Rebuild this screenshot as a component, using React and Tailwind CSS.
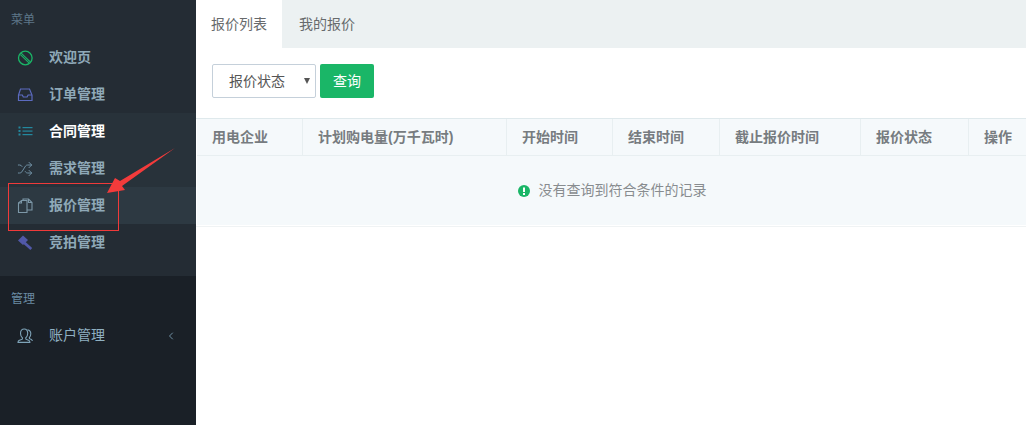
import React from "react";
import { Shuffle, ChevronLeft } from "lucide-react";

const FONT = "font-['Liberation_Sans','Noto_Sans_CJK_SC',sans-serif]";

const BanIcon = () => (
  <svg width="16" height="16" viewBox="0 0 16 16" fill="none" stroke="#1ab667" strokeWidth="1.3">
    <circle cx="8.300" cy="8" r="6.800" />
    <path d="M4.200 3.200 13 11.600M3.400 4.600l8.600 8.200" strokeWidth="1.100" />
  </svg>
);

const InboxIcon = () => (
  <svg width="16" height="16" viewBox="0 0 16 16" fill="none" stroke="#5c6bc0" strokeWidth="1.2">
    <path d="M3.500 2h9l2.500 6v5.500H1.500V8z" />
    <path d="M1.500 8h3.800l1 2h3.800l1-2H15" />
  </svg>
);

const ListIcon = () => (
  <svg width="16" height="16" viewBox="0 0 16 16" fill="#23889e">
    <rect x="1.500" y="2.500" width="2" height="2" />
    <rect x="1.500" y="6" width="2" height="2" />
    <rect x="1.500" y="9.500" width="2" height="2" />
    <rect x="5.500" y="3" width="10" height="1.200" />
    <rect x="5.500" y="6.500" width="10" height="1.200" />
    <rect x="5.500" y="10" width="10" height="1.200" />
  </svg>
);

const FilesIcon = () => (
  <svg width="16" height="16" viewBox="0 0 16 16" fill="none" stroke="#7d98a8" strokeWidth="1.1">
    <path d="M1.500 5 4.500 2.500H10V14.500H1.500z" />
    <path d="M4.500 2.500V5H1.500" />
    <path d="M6 2.500V1H11.500L15 4.500V12H10" />
    <path d="M11.500 1V4.500H15" />
  </svg>
);

const GavelIcon = () => (
  <svg width="16" height="16" viewBox="0 0 16 16" fill="#5158a8">
    <path d="M6 .5 11 5 6 10 1 5.500z" />
    <path d="M8 6.500 15.200 13 13.400 15 6 8.500z" />
  </svg>
);

const ShuffleIcon = () => <Shuffle size={16} strokeWidth={1.5} className="text-[#6f8fa3]" />;

const UserIcon = () => (
  <svg width="16" height="16" viewBox="0 0 16 16" fill="none" stroke="#7ea3b8" strokeWidth="1.1">
    <path d="M5.500 10c-1.600-1.400-2-3-2-4.600C3.500 2.800 5 1 7.200 1s3.500 1.800 3.500 4.400c0 1.600-.6 3.200-2 4.600l.2 1.200 3.100 1.300c.6.300.9 1 .9 1.900H1c0-.9.300-1.600.9-1.900l3.400-1.300z" />
    <path d="M10.500 1.800c2 .4 3.300 2 3.300 4 0 1.500-.5 2.800-1.500 3.900l.2 1 2 .9c.5.300.8.800.8 1.400" />
  </svg>
);

const menu = [
  { label: "欢迎页", icon: BanIcon, rowBg: "" },
  { label: "订单管理", icon: InboxIcon, rowBg: "" },
  { label: "合同管理", icon: ListIcon, rowBg: "bg-[#28323a]", active: true },
  { label: "需求管理", icon: ShuffleIcon, rowBg: "bg-[#28323a]" },
  { label: "报价管理", icon: FilesIcon, rowBg: "bg-[#2d3942]" },
  { label: "竞拍管理", icon: GavelIcon, rowBg: "" },
];

const columns = ["用电企业", "计划购电量(万千瓦时)", "开始时间", "结束时间", "截止报价时间", "报价状态", "操作"];

function MenuRow({ item }) {
  const Icon = item.icon;
  return (
    <div className={`flex h-[37px] items-center pl-[17px] ${item.rowBg}`}>
      <Icon />
      <span className={`ml-[16px] text-[14px] font-bold ${item.active ? "text-white" : "text-[#8fa9b8]"}`}>
        {item.label}
      </span>
    </div>
  );
}

function Sidebar() {
  return (
    <aside className="flex w-[196px] shrink-0 flex-col bg-[#1a2027]">
      <div className="h-[276px] bg-[#242c34]">
        <div className="flex h-[39px] items-center pl-[11px] pt-[1px] text-[12px] text-[#5d7688]">菜单</div>
        {menu.map((item) => (
          <MenuRow key={item.label} item={item} />
        ))}
      </div>
      <div className="mt-[4px] flex h-[37px] items-center pl-[11px] text-[12px] text-[#6b8ba3]">管理</div>
      <div className="flex h-[37px] items-center pl-[17px] pr-[19px]">
        <UserIcon />
        <span className="ml-[16px] flex-1 text-[14px] text-[#8fb0c2]">账户管理</span>
        <ChevronLeft size={12} className="text-[#6f8fa3]" />
      </div>
    </aside>
  );
}

function Tabs() {
  return (
    <div className="flex h-[48px] bg-[#ecf1f2] text-[14px] text-[#676a6c]">
      <div className="flex w-[86px] items-center justify-center bg-white">报价列表</div>
      <div className="flex w-[88px] items-center justify-center pl-[2px]">我的报价</div>
    </div>
  );
}

function Toolbar() {
  return (
    <div className="flex h-[70px] items-start gap-[4px] pl-[16px] pt-[16px]">
      <div className="flex h-[34px] w-[104px] items-center rounded-[2px] border border-[#c5d0da] bg-white pl-[16px] text-[14px] text-[#555]">
        报价状态
        <span className="ml-[19px] h-0 w-0 border-x-[3.500px] border-t-[6px] border-x-transparent border-t-[#555]" />
      </div>
      <button className="h-[34px] w-[54px] rounded-[2px] bg-[#1ab667] text-[14px] text-white">查询</button>
    </div>
  );
}

function DataTable() {
  return (
    <div className="border-t border-[#dfe9ec]">
      <div className="border-l border-white bg-[#f5f9fb]">
        <div className="grid h-[37px] grid-cols-[106px_204px_106px_107px_141px_108px_57px] border-b border-[#e8eff1] text-[14px] font-bold text-[#777c80]">
          {columns.map((col, i) => (
            <div key={col} className={`flex items-center whitespace-nowrap pl-[15px] ${i < columns.length - 1 ? "border-r border-[#e8eff1]" : ""}`}>
              {col}
            </div>
          ))}
        </div>
        <div className="flex h-[69px] items-center justify-center pl-[1px] text-[14px] text-[#888c8f]">
          <svg width="12" height="12" viewBox="0 0 12 12" className="mr-[9px]">
            <circle cx="6" cy="6" r="6" fill="#1ab667" />
            <rect x="5" y="2.500" width="2" height="4.500" fill="#fff" />
            <rect x="5" y="8" width="2" height="2" fill="#fff" />
          </svg>
          没有查询到符合条件的记录
        </div>
      </div>
      <div className="mt-[1px] h-[1px] bg-[#f0f3f4]" />
    </div>
  );
}

function Annotation() {
  return (
    <>
      <div className="absolute left-[8px] top-[183px] h-[48px] w-[111px] border border-[#f03a3a]" />
      <svg className="absolute left-[100px] top-[140px]" width="80" height="60" viewBox="0 0 80 60">
        <path d="M75 8 L20 41 L15 38 L7 53 L25 50 L22 46 Z" fill="#f33b3b" />
      </svg>
    </>
  );
}

export default function App() {
  return (
    <div className={`relative flex h-[425px] w-[1026px] overflow-hidden bg-white ${FONT}`}>
      <Sidebar />
      <main className="min-w-0 flex-1">
        <Tabs />
        <Toolbar />
        <DataTable />
      </main>
      <Annotation />
    </div>
  );
}
